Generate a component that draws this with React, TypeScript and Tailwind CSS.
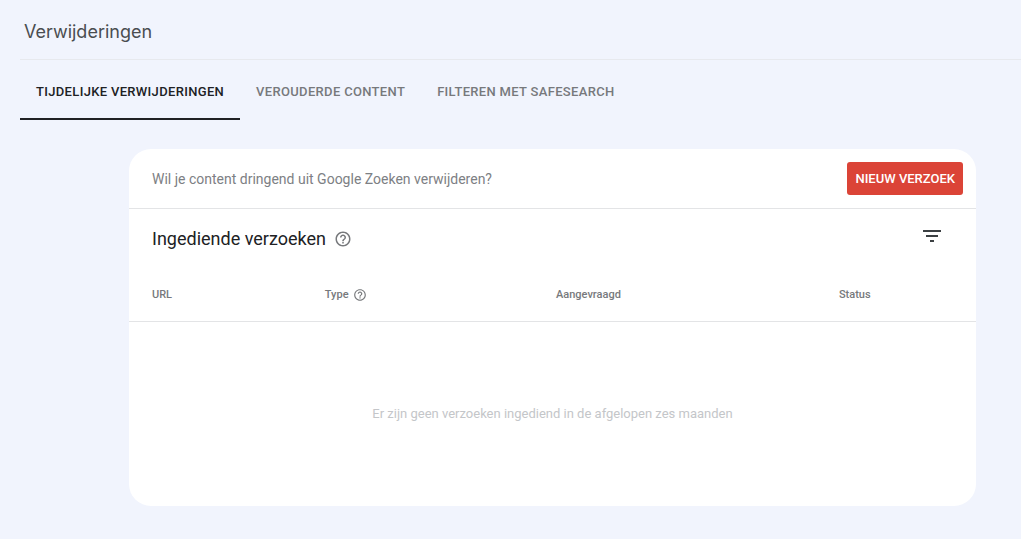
import { useState } from 'react'

const tabs = [
    'Tijdelijke verwijderingen',
    'Verouderde content',
    'Filteren met SafeSearch',
]

function HelpIcon({ className }: { className: string }) {
    return (
        <svg viewBox="0 0 24 24" fill="currentColor" className={className} aria-hidden="true">
            <path d="M11 18h2v-2h-2v2zm1-16C6.48 2 2 6.48 2 12s4.48 10 10 10 10-4.48 10-10S17.52 2 12 2zm0 18c-4.41 0-8-3.59-8-8s3.59-8 8-8 8 3.59 8 8-3.59 8-8 8zm0-14c-2.21 0-4 1.79-4 4h2c0-1.1.9-2 2-2s2 .9 2 2c0 2-3 1.75-3 5h2c0-2.25 3-2.5 3-5 0-2.21-1.79-4-4-4z" />
        </svg>
    )
}

function FilterIcon() {
    return (
        <svg viewBox="0 0 24 24" fill="currentColor" className="size-6" aria-hidden="true">
            <path d="M10 18h4v-2h-4v2zM3 6v2h18V6H3zm3 7h12v-2H6v2z" />
        </svg>
    )
}

export default function App() {
    const [active, setActive] = useState(0)

    return (
        <div className="min-h-screen bg-white pr-[3px] pb-[3px] font-[Roboto,sans-serif]">
            <div className="min-h-[calc(100vh-3px)] bg-[#f1f4fd] pl-5">
                <header className="border-b border-[#e7e9ee] px-1 pt-4 pb-3">
                    <h1 className="font-[Inter,sans-serif] text-[18px] leading-[31px] text-[#4a4d50]">
                        Verwijderingen
                    </h1>
                </header>

                {/* Tabs */}
                <div role="tablist" className="flex">
                    {tabs.map((tab, i) => (
                        <button
                            key={tab}
                            type="button"
                            role="tab"
                            aria-selected={i === active}
                            onClick={() => setActive(i)}
                            className={`border-b-2 px-4 pt-[22px] pb-4 text-[13px] leading-5 font-medium tracking-wide uppercase ${
                                i === active
                                    ? 'border-[#202124] text-[#202124]'
                                    : 'border-transparent text-[#77797c]'
                            }`}>
                            {tab}
                        </button>
                    ))}
                </div>

                <main className="pt-[29px] pr-[45px] pl-[109px]">
                    <section className="overflow-hidden rounded-[22px] bg-white">
                        <div className="flex items-center justify-between border-b border-[#e3e4e6] py-[13px] pr-[13px] pl-[23px]">
                            <p className="text-[14px] leading-5 text-[#7d8084]">
                                Wil je content dringend uit Google Zoeken verwijderen?
                            </p>
                            <button
                                type="button"
                                className="rounded-[3px] bg-[#db4437] px-2 text-[13px] leading-[33px] font-medium text-white uppercase">
                                Nieuw verzoek
                            </button>
                        </div>

                        <div className="flex items-start justify-between pt-[15px] pr-8 pl-[23px]">
                            <h2 className="flex items-center gap-2 text-[18px] leading-[30px] text-[#202124]">
                                Ingediende verzoeken
                                <HelpIcon className="size-[18px] text-[#77797c]" />
                            </h2>
                            <button type="button" aria-label="Filteren" className="text-[#3c4043]">
                                <FilterIcon />
                            </button>
                        </div>

                        <table className="w-full table-fixed text-left text-[11px] leading-4">
                            <thead className="text-[#77797c]">
                                <tr className="border-b border-[#e3e4e6]">
                                    <th className="w-[20.4%] pt-[33px] pb-[18px] pl-[23px] font-medium">URL</th>
                                    <th className="w-[27.3%] pt-[33px] pb-[18px] pl-[23px] font-medium">
                                        <span className="flex items-center gap-1">
                                            Type
                                            <HelpIcon className="size-[14px]" />
                                        </span>
                                    </th>
                                    <th className="w-[33.4%] pt-[33px] pb-[18px] pl-[23px] font-medium">Aangevraagd</th>
                                    <th className="pt-[33px] pb-[18px] pl-[23px] font-medium">Status</th>
                                </tr>
                            </thead>
                            <tbody>
                                <tr>
                                    <td colSpan={4} className="h-[184px] text-center text-[13px] text-[#c4c6c9]">
                                        Er zijn geen verzoeken ingediend in de afgelopen zes maanden
                                    </td>
                                </tr>
                            </tbody>
                        </table>
                    </section>
                </main>
            </div>
        </div>
    )
}
